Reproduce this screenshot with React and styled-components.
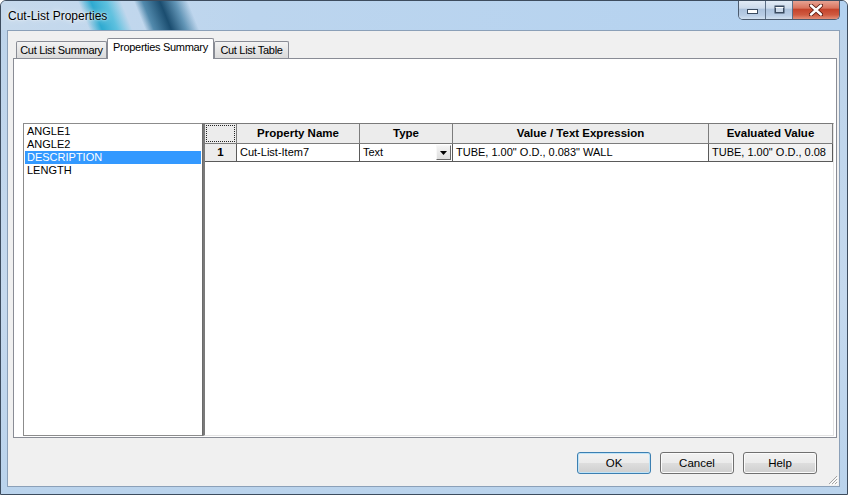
import React from "react"
import styled, { createGlobalStyle } from "styled-components"

const GlobalStyle = createGlobalStyle`
  html, body {
    margin: 0;
    padding: 0;
    background: #ffffff;
  }
  * {
    box-sizing: border-box;
  }
`

const Window = styled.div`
  width: 848px;
  height: 495px;
  border: 1px solid #3d4c5e;
  border-radius: 6px 6px 0 0;
  background: linear-gradient(180deg, #bcd3ea 0%, #c5d9ee 60%, #bad3ec 100%);
  display: flex;
  flex-direction: column;
  overflow: hidden;
  font-family: "Liberation Sans", Arial, sans-serif;
  color: #000;
`

const TitleBar = styled.div`
  height: 29px;
  flex: none;
  display: flex;
  justify-content: space-between;
  align-items: flex-start;
  padding-left: 7px;
  background:
    linear-gradient(68deg, transparent 0 82px, rgba(30, 165, 205, 0.9) 94px, rgba(60, 185, 218, 0.75) 108px, transparent 122px),
    linear-gradient(68deg, transparent 0 134px, rgba(35, 105, 145, 0.7) 142px, rgba(18, 70, 105, 0.95) 158px, rgba(35, 105, 145, 0.6) 172px, transparent 184px),
    linear-gradient(90deg, #c6d9ec 0%, #bcd5ee 30%, #b4d2f0 100%);
`

const Title = styled.div`
  font-size: 12px;
  line-height: 31px;
  position: relative;
  z-index: 1;
  text-shadow: 0 0 6px rgba(255, 255, 255, 0.9), 0 0 2px rgba(255, 255, 255, 0.9);
`

const CaptionGroup = styled.div`
  display: flex;
  height: 20px;
  margin-top: -1px;
  margin-right: 7px;
  border: 1px solid #4c5b6e;
  border-top: none;
  border-radius: 0 0 5px 5px;
  overflow: hidden;
`

const CaptionButton = styled.div`
  width: ${(p) => p.$w}px;
  height: 100%;
  display: flex;
  align-items: center;
  justify-content: center;
  border-left: ${(p) => (p.$first ? "none" : "1px solid #5d6f86")};
  background: ${(p) =>
    p.$close
      ? "linear-gradient(180deg, #e9a99a 0%, #d9755f 42%, #c5442c 50%, #cf5a40 78%, #e48f78 100%)"
      : "linear-gradient(180deg, #e4edf7 0%, #cddbeb 42%, #adc3dd 50%, #b9cde5 80%, #d2e1f1 100%)"};
`

const TabArea = styled.div`
  flex: 1;
  margin: 0 7px 7px 6px;
  border: 1px solid #8ba0b8;
  background: #f0f0f0;
  position: relative;
  display: flex;
  flex-direction: column;
  padding: 7px 2px 0 5px;
`

const TabStrip = styled.div`
  height: 21px;
  display: flex;
  align-items: flex-end;
  padding-left: 3px;
  margin-bottom: -1px;
  position: relative;
  z-index: 1;
`

const Tab = styled.div`
  width: ${(p) => p.$w}px;
  height: ${(p) => (p.$active ? 21 : 17)}px;
  margin-bottom: ${(p) => (p.$active ? 0 : 1)}px;
  border: 1px solid #898c95;
  border-bottom: none;
  border-radius: 2px 2px 0 0;
  background: ${(p) =>
    p.$active ? "#ffffff" : "linear-gradient(180deg, #f3f3f3 0%, #e6e6e6 50%, #dadada 100%)"};
  font-size: 11px;
  letter-spacing: -0.3px;
  line-height: ${(p) => (p.$active ? 17 : 16)}px;
  text-align: center;
  white-space: nowrap;
`

const TabPanel = styled.div`
  height: 380px;
  flex: none;
  border: 1px solid #898c95;
  background: #ffffff;
  display: flex;
  padding: 64px 3px 1px 9px;
`

const ListBox = styled.div`
  width: 180px;
  flex: none;
  border: 1px solid #8c8c8c;
  border-right-color: #6b6b6b;
  padding-top: 1px;
  font-size: 11px;
`

const ListItem = styled.div`
  height: 13px;
  line-height: 13px;
  margin: 0 1px;
  padding-left: 2px;
  background: ${(p) => (p.$selected ? "#3399ff" : "transparent")};
  color: ${(p) => (p.$selected ? "#ffffff" : "#000000")};
`

const Grid = styled.div`
  flex: 1;
  border-left: 2px solid #7a7a7a;
  border-top: 1px solid #7a7a7a;
  border-bottom: 1px solid #e3e3e3;
  border-right: 1px solid #e3e3e3;
  display: grid;
  grid-template-columns: 32px 123px 93px 256px 124px;
  grid-auto-rows: min-content;
  align-content: start;
  font-size: 11px;
`

const HeadCell = styled.div`
  height: 20px;
  border-right: 1px solid #7c7c7c;
  border-bottom: 1px solid #7c7c7c;
  background: #ececec;
  font-weight: bold;
  font-size: 11.5px;
  line-height: 19px;
  text-align: center;
  white-space: nowrap;
  overflow: hidden;
  padding: ${(p) => (p.$corner ? "1px" : "0")};
`

const FocusRect = styled.div`
  width: 100%;
  height: 100%;
  border: 1px dotted #222;
`

const RowHead = styled(HeadCell)`
  height: 18px;
  line-height: 17px;
  border-color: #5a5a5a;
`

const Cell = styled.div`
  height: 18px;
  border-right: 1px solid #5a5a5a;
  border-bottom: 1px solid #5a5a5a;
  background: ${(p) => (p.$readonly ? "#f3f3f3" : "#ffffff")};
  line-height: 17px;
  padding-left: 3px;
  white-space: nowrap;
  overflow: hidden;
  display: flex;
  align-items: center;
  justify-content: space-between;
`

const DropButton = styled.div`
  width: 15px;
  height: 15px;
  margin-right: 1px;
  flex: none;
  border: 1px solid;
  border-color: #f8f8f8 #6a6a6a #6a6a6a #f8f8f8;
  background: linear-gradient(180deg, #f4f4f4, #dedede);
  display: flex;
  align-items: center;
  justify-content: center;
`

const ButtonRow = styled.div`
  display: flex;
  justify-content: flex-end;
  gap: 9px;
  margin-top: 14px;
  padding-right: 20px;
`

const DialogButton = styled.div`
  width: 74px;
  height: 22px;
  border: 1px solid ${(p) => (p.$default ? "#3c7fb1" : "#707070")};
  border-radius: 3px;
  background: linear-gradient(180deg, #f2f2f2 0%, #ebebeb 48%, #dddddd 52%, #cfcfcf 100%);
  box-shadow: inset 0 0 0 1px ${(p) => (p.$default ? "#bfe3f7" : "#fbfbfb")};
  font-size: 11.5px;
  line-height: 20px;
  text-align: center;
`

const Grip = styled.svg`
  position: absolute;
  right: 1px;
  bottom: 1px;
`

const tabs = [
  { label: "Cut List Summary", w: 91 },
  { label: "Properties Summary", w: 107, active: true },
  { label: "Cut List Table", w: 75 },
]

const properties = ["ANGLE1", "ANGLE2", "DESCRIPTION", "LENGTH"]

function App() {
  return (
    <>
      <GlobalStyle />
      <Window>
        <TitleBar>
          <Title>Cut-List Properties</Title>
          <CaptionGroup>
            <CaptionButton $w={26} $first>
              <svg width="11" height="8" viewBox="0 0 11 8">
                <rect x="0.5" y="3.5" width="10" height="4" fill="#fff" stroke="#3a4b60" />
              </svg>
            </CaptionButton>
            <CaptionButton $w={27}>
              <svg width="11" height="9" viewBox="0 0 11 9">
                <rect x="0.5" y="0.5" width="10" height="8" fill="#3a4b60" />
                <rect x="2" y="3" width="7" height="4" fill="#cbd9ea" />
                <rect x="1.5" y="2" width="8" height="1" fill="#fff" />
              </svg>
            </CaptionButton>
            <CaptionButton $w={47} $close>
              <svg width="14" height="12" viewBox="0 0 14 12">
                <path d="M2 1.5 L12 10.5 M12 1.5 L2 10.5" stroke="#5a1a10" strokeWidth="4.2" strokeLinecap="round" />
                <path d="M2 1.5 L12 10.5 M12 1.5 L2 10.5" stroke="#ffffff" strokeWidth="2.4" strokeLinecap="round" />
              </svg>
            </CaptionButton>
          </CaptionGroup>
        </TitleBar>

        <TabArea>
          <TabStrip>
            {tabs.map((t) => (
              <Tab key={t.label} $w={t.w} $active={t.active}>
                {t.label}
              </Tab>
            ))}
          </TabStrip>
          <TabPanel>
            <ListBox>
              {properties.map((name) => (
                <ListItem key={name} $selected={name === "DESCRIPTION"}>
                  {name}
                </ListItem>
              ))}
            </ListBox>
            <Grid>
              <HeadCell $corner>
                <FocusRect />
              </HeadCell>
              <HeadCell>Property Name</HeadCell>
              <HeadCell>Type</HeadCell>
              <HeadCell>Value / Text Expression</HeadCell>
              <HeadCell>Evaluated Value</HeadCell>

              <RowHead>1</RowHead>
              <Cell>Cut-List-Item7</Cell>
              <Cell>
                Text
                <DropButton>
                  <svg width="7" height="4" viewBox="0 0 7 4">
                    <path d="M0 0 H7 L3.5 4 Z" fill="#000" />
                  </svg>
                </DropButton>
              </Cell>
              <Cell>TUBE, 1.00" O.D., 0.083" WALL</Cell>
              <Cell $readonly>TUBE, 1.00" O.D., 0.08</Cell>
            </Grid>
          </TabPanel>

          <ButtonRow>
            <DialogButton $default>OK</DialogButton>
            <DialogButton>Cancel</DialogButton>
            <DialogButton>Help</DialogButton>
          </ButtonRow>

          <Grip width="12" height="12" viewBox="0 0 12 12">
            <path d="M11 3 L3 11 M11 6 L6 11 M11 9 L9 11" stroke="#a5a5a5" strokeWidth="1" />
            <path d="M12 4 L4 12 M12 7 L7 12 M12 10 L10 12" stroke="#ffffff" strokeWidth="1" />
          </Grip>
        </TabArea>
      </Window>
    </>
  )
}

export default App
